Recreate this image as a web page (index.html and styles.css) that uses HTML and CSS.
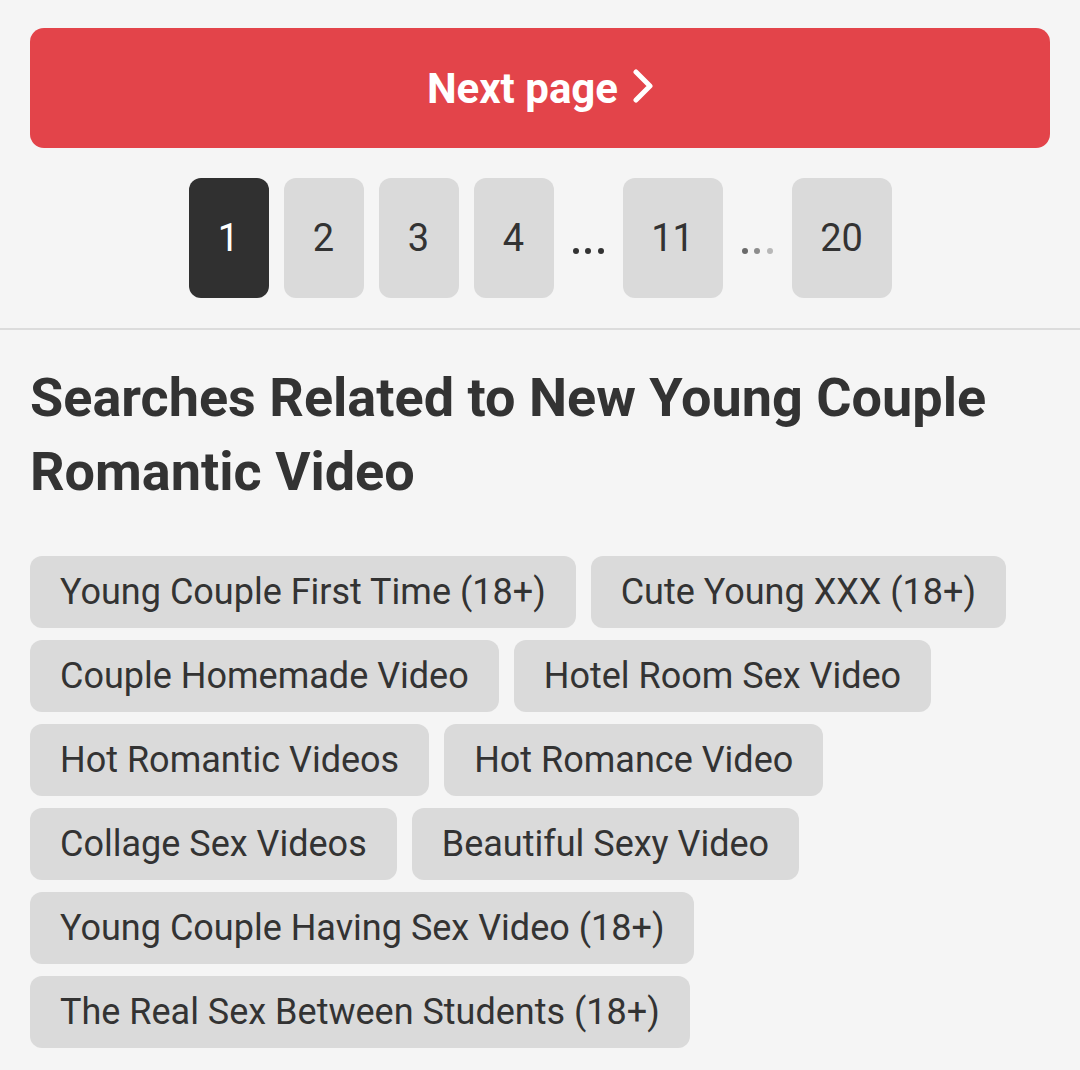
FILE: index.html
```html
<!DOCTYPE html>
<html>
<head>
<meta charset="utf-8">
<link rel="stylesheet" href="styles.css">
</head>
<body>
<div class="top">
  <a class="next" href="#">Next page <svg class="chev" viewBox="0 0 20 34" width="20" height="34"><path d="M3 3 L17 17 L3 31" fill="none" stroke="#fff" stroke-width="5" stroke-linecap="round" stroke-linejoin="round"/></svg></a>
  <div class="pager">
    <span class="pg active">1</span>
    <span class="pg">2</span>
    <span class="pg">3</span>
    <span class="pg">4</span>
    <span class="dots"><i class="dot"></i><i class="dot"></i><i class="dot"></i></span>
    <span class="pg wide">11</span>
    <span class="dots light"><i class="dot"></i><i class="dot"></i><i class="dot"></i></span>
    <span class="pg wide">20</span>
  </div>
</div>
<div class="related">
  <h2 class="title">Searches Related to New Young Couple Romantic Video</h2>
  <div class="tags">
    <a class="tag" href="#">Young Couple First Time (18+)</a>
    <a class="tag" href="#">Cute Young XXX (18+)</a>
    <a class="tag" href="#">Couple Homemade Video</a>
    <a class="tag" href="#">Hotel Room Sex Video</a>
    <a class="tag" href="#">Hot Romantic Videos</a>
    <a class="tag" href="#">Hot Romance Video</a>
    <a class="tag" href="#">Collage Sex Videos</a>
    <a class="tag" href="#">Beautiful Sexy Video</a>
    <a class="tag" href="#">Young Couple Having Sex Video (18+)</a>
    <a class="tag" href="#">The Real Sex Between Students (18+)</a>
  </div>
</div>
</body>
</html>
```
FILE: styles.css
```css
html, body {
  margin: 0;
  padding: 0;
  background: #f5f5f5;
  font-family: Roboto, "Liberation Sans", sans-serif;
  color: #333;
}
.top {
  padding: 28px 30px 30px;
  border-bottom: 2px solid #dcdcdc;
}
.next {
  display: flex;
  align-items: center;
  justify-content: center;
  gap: 15px;
  height: 120px;
  background: #e3444a;
  border-radius: 14px;
  color: #fff;
  font-weight: 700;
  font-size: 42px;
  text-decoration: none;
}
.chev {
  display: block;
  margin-top: -4px;
}
.pager {
  display: flex;
  justify-content: center;
  align-items: center;
  gap: 15px;
  margin-top: 30px;
}
.pg {
  width: 80px;
  height: 120px;
  display: flex;
  align-items: center;
  justify-content: center;
  background: #dadada;
  border-radius: 12px;
  font-size: 38px;
  color: #333;
}
.pg.wide {
  width: 100px;
}
.pg.active {
  background: #303030;
  color: #fff;
}
.dots {
  width: 39px;
  display: flex;
  justify-content: center;
  gap: 6.5px;
  padding-top: 26px;
}
.dot {
  width: 6px;
  height: 6px;
  border-radius: 50%;
  background: #333;
}
.dots.light .dot:nth-child(1) {
  background: #6a6a6a;
}
.dots.light .dot:nth-child(2) {
  background: #8c8c8c;
}
.dots.light .dot:nth-child(3) {
  background: #b8b8b8;
}
.related {
  padding: 0 30px;
}
.title {
  margin: 0;
  padding-top: 31px;
  font-size: 54px;
  line-height: 74px;
  font-weight: 700;
}
.tags {
  display: flex;
  flex-wrap: wrap;
  gap: 12px 15px;
  margin-top: 47px;
}
.tag {
  display: flex;
  align-items: center;
  height: 72px;
  padding: 0 30px;
  background: #dadada;
  border-radius: 12px;
  font-size: 36px;
  color: #333;
  text-decoration: none;
}
```
